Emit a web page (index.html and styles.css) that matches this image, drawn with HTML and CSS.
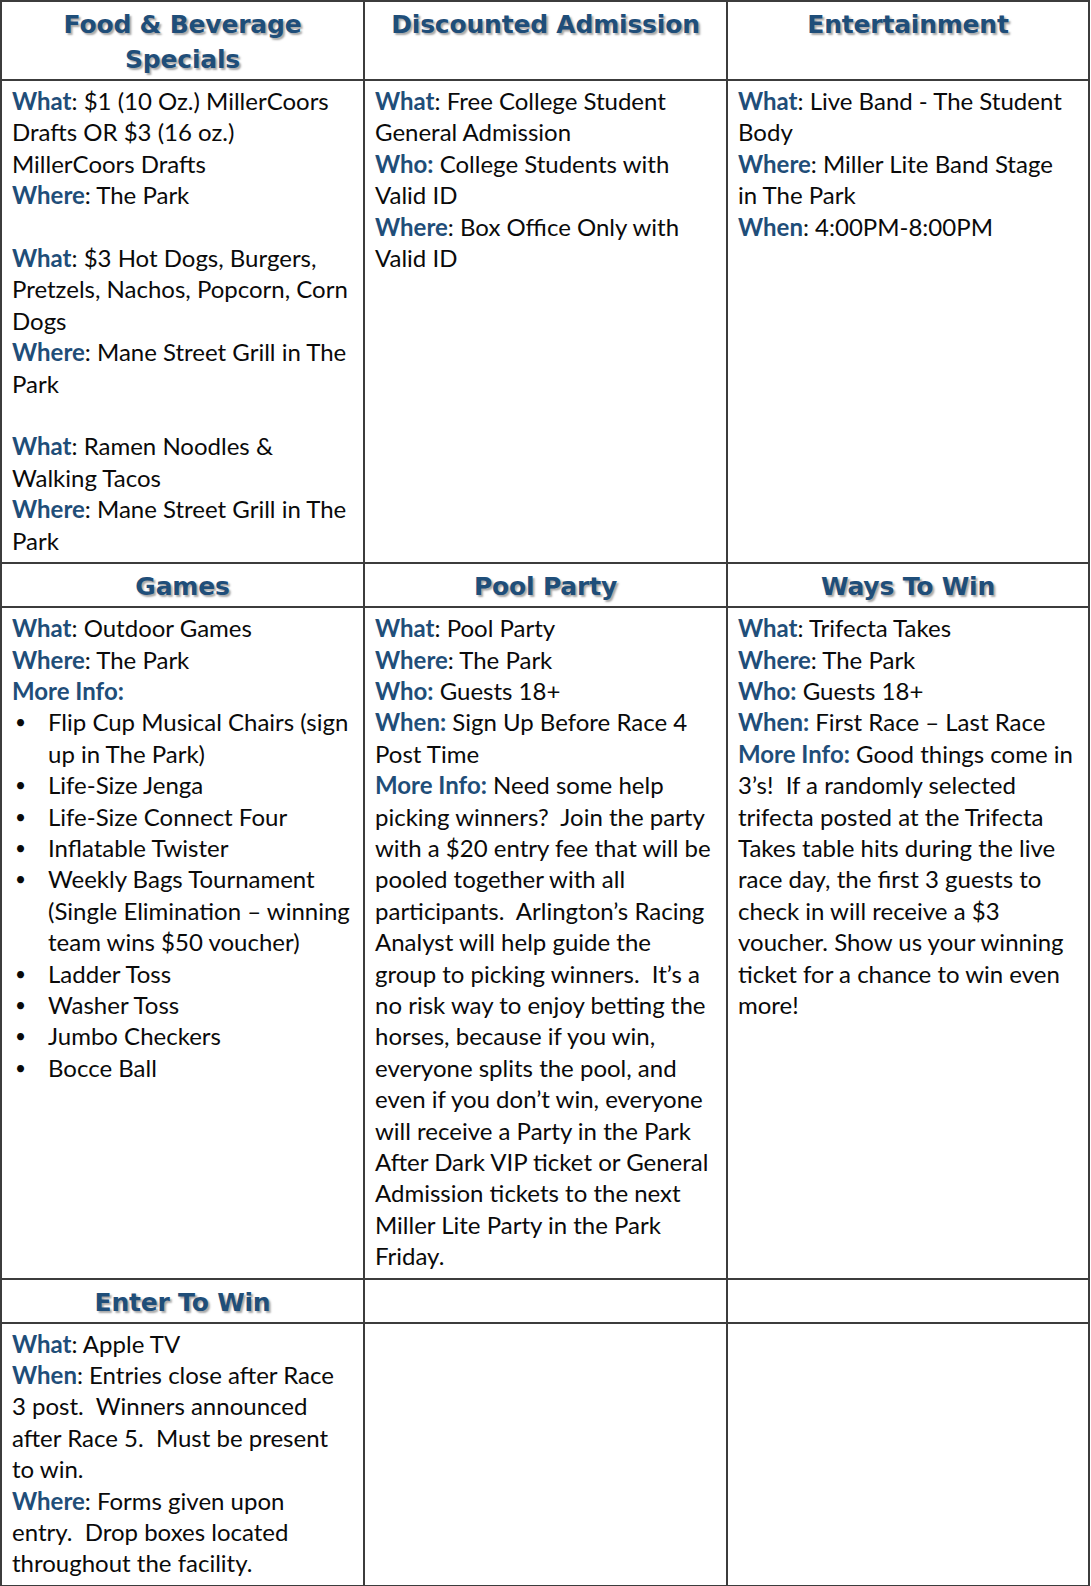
FILE: index.html
```html
<!DOCTYPE html>
<html lang="en">
<head>
<meta charset="utf-8">
<title>Party in the Park</title>
<link rel="stylesheet" href="styles.css">
</head>
<body>
<table class="grid">
  <colgroup><col class="c1"><col class="c2"><col class="c3"></colgroup>
  <tr class="head">
    <th>Food &amp; Beverage<br>Specials</th>
    <th>Discounted Admission</th>
    <th>Entertainment</th>
  </tr>
  <tr class="body">
    <td>
      <p><b>What</b>: $1 (10 Oz.) MillerCoors<br>Drafts OR $3 (16 oz.)<br>MillerCoors Drafts</p>
      <p><b>Where</b>: The Park</p>
      <p class="blank">&nbsp;</p>
      <p><b>What</b>: $3 Hot Dogs, Burgers,<br>Pretzels, Nachos, Popcorn, Corn<br>Dogs</p>
      <p><b>Where</b>: Mane Street Grill in The<br>Park</p>
      <p class="blank">&nbsp;</p>
      <p><b>What</b>: Ramen Noodles &amp;<br>Walking Tacos</p>
      <p><b>Where</b>: Mane Street Grill in The<br>Park</p>
    </td>
    <td>
      <p><b>What</b>: Free College Student<br>General Admission</p>
      <p><b>Who:</b> College Students with<br>Valid ID</p>
      <p><b>Where</b>: Box Office Only with<br>Valid ID</p>
    </td>
    <td>
      <p><b>What</b>: Live Band - The Student<br>Body</p>
      <p><b>Where</b>: Miller Lite Band Stage<br>in The Park</p>
      <p><b>When</b>: 4:00PM-8:00PM</p>
    </td>
  </tr>
  <tr class="head">
    <th>Games</th>
    <th>Pool Party</th>
    <th>Ways To Win</th>
  </tr>
  <tr class="body">
    <td>
      <p><b>What</b>: Outdoor Games</p>
      <p><b>Where</b>: The Park</p>
      <p><b>More Info:</b></p>
      <ul class="bullets">
        <li>Flip Cup Musical Chairs (sign<br>up in The Park)</li>
        <li>Life-Size Jenga</li>
        <li>Life-Size Connect Four</li>
        <li>Inflatable Twister</li>
        <li>Weekly Bags Tournament<br>(Single Elimination – winning<br>team wins $50 voucher)</li>
        <li>Ladder Toss</li>
        <li>Washer Toss</li>
        <li>Jumbo Checkers</li>
        <li>Bocce Ball</li>
      </ul>
    </td>
    <td>
      <p><b>What</b>: Pool Party</p>
      <p><b>Where</b>: The Park</p>
      <p><b>Who:</b> Guests 18+</p>
      <p><b>When:</b> Sign Up Before Race 4<br>Post Time</p>
      <p><b>More Info:</b> Need some help<br>picking winners?&nbsp; Join the party<br>with a $20 entry fee that will be<br>pooled together with all<br>participants.&nbsp; Arlington’s Racing<br>Analyst will help guide the<br>group to picking winners.&nbsp; It’s a<br>no risk way to enjoy betting the<br>horses, because if you win,<br>everyone splits the pool, and<br>even if you don’t win, everyone<br>will receive a Party in the Park<br>After Dark VIP ticket or General<br>Admission tickets to the next<br>Miller Lite Party in the Park<br>Friday.</p>
    </td>
    <td>
      <p><b>What</b>: Trifecta Takes</p>
      <p><b>Where</b>: The Park</p>
      <p><b>Who:</b> Guests 18+</p>
      <p><b>When:</b> First Race – Last Race</p>
      <p><b>More Info:</b> Good things come in<br>3’s!&nbsp; If a randomly selected<br>trifecta posted at the Trifecta<br>Takes table hits during the live<br>race day, the first 3 guests to<br>check in will receive a $3<br>voucher. Show us your winning<br>ticket for a chance to win even<br>more!</p>
    </td>
  </tr>
  <tr class="head">
    <th>Enter To Win</th>
    <th></th>
    <th></th>
  </tr>
  <tr class="body">
    <td>
      <p><b>What</b>: Apple TV</p>
      <p><b>When</b>: Entries close after Race<br>3 post.&nbsp; Winners announced<br>after Race 5.&nbsp; Must be present<br>to win.</p>
      <p><b>Where</b>: Forms given upon<br>entry.&nbsp; Drop boxes located<br>throughout the facility.</p>
    </td>
    <td></td>
    <td></td>
  </tr>
</table>
</body>
</html>
```

FILE: styles.css
```css
html, body {
  margin: 0;
  padding: 0;
  background: #ffffff;
}

.grid {
  border-collapse: collapse;
  table-layout: fixed;
  width: 1090px;
  font-family: "Lato", "Open Sans", sans-serif;
  color: #0a0a0a;
}

.c1 { width: 363px; }
.c2 { width: 363px; }
.c3 { width: 362px; }

.grid th,
.grid td {
  border: 2px solid #3c3c3c;
  vertical-align: top;
}

.head th {
  padding: 5px 8px 2px;
  font-family: "DejaVu Sans", "Liberation Sans", sans-serif;
  font-weight: bold;
  font-size: 25px;
  line-height: 35px;
  letter-spacing: -0.2px;
  color: #1f4e79;
  text-align: center;
  text-shadow: 2px 2px 2px rgba(0, 0, 0, 0.35);
}

.body td {
  padding: 4px 6px 6px 10px;
  font-size: 24px;
  line-height: 31.4px;
  white-space: nowrap;
}

.body p {
  margin: 0;
}

.body b {
  color: #1f4e79;
  font-weight: bold;
}

.bullets {
  margin: 0;
  padding: 0;
  list-style: none;
}

.bullets li {
  display: grid;
  grid-template-columns: 36px 1fr;
}

.bullets li::before {
  content: "•";
  font-size: 19px;
  padding-left: 3px;
}
```
